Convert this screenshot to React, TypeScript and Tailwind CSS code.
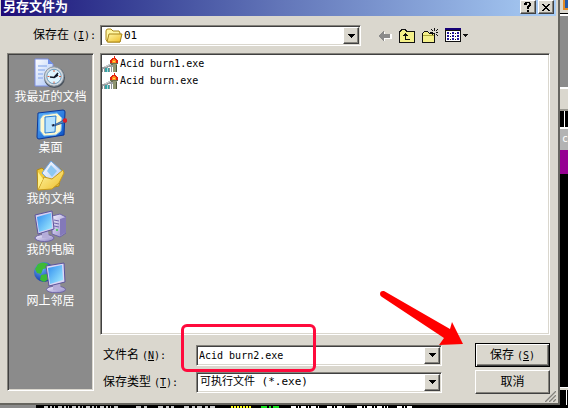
import React from 'react';

const SUNKEN =
  'border border-t-[#85837c] border-l-[#85837c] border-b-white border-r-white shadow-[inset_1px_1px_0_#404040,inset_-1px_-1px_0_#dad7ce]';
const RAISED =
  'border border-t-white border-l-white border-b-[#404040] border-r-[#404040] shadow-[inset_-1px_-1px_0_#85837c]';
const MONO = "font-['DejaVu_Sans_Mono','Noto_Sans_CJK_SC',monospace]";

function Latin({ children }: { children: React.ReactNode }) {
  return <span className={`${MONO} ml-[3px] text-[10px]`}>{children}</span>;
}

function Gradients() {
  return (
    <svg width="0" height="0" className="absolute" aria-hidden="true">
      <defs>
        <linearGradient id="screen" x1="0" y1="0" x2="1" y2="1">
          <stop offset="0" stopColor="#2f8df0" />
          <stop offset="1" stopColor="#a5efff" />
        </linearGradient>
        <linearGradient id="paper" x1="0" y1="0" x2="1" y2="1">
          <stop offset="0" stopColor="#ffffff" />
          <stop offset="1" stopColor="#a9c4f5" />
        </linearGradient>
        <linearGradient id="blue" x1="0" y1="0" x2="1" y2="1">
          <stop offset="0" stopColor="#58b4ff" />
          <stop offset="1" stopColor="#0a4fc4" />
        </linearGradient>
        <linearGradient id="gold" x1="0" y1="0" x2="1" y2="1">
          <stop offset="0" stopColor="#fff7a8" />
          <stop offset="1" stopColor="#eebd28" />
        </linearGradient>
        <linearGradient id="case" x1="0" y1="0" x2="1" y2="1">
          <stop offset="0" stopColor="#f4f1ff" />
          <stop offset="1" stopColor="#8d84c4" />
        </linearGradient>
        <radialGradient id="globe" cx="0.35" cy="0.3" r="0.8">
          <stop offset="0" stopColor="#6db4ff" />
          <stop offset="1" stopColor="#062a9c" />
        </radialGradient>
      </defs>
    </svg>
  );
}

function RecentIcon() {
  return (
    <svg width="32" height="32" viewBox="0 0 32 32" aria-hidden="true">
      <path d="M1 2H14L19 7V29H1Z" fill="url(#paper)" stroke="#7d8fe4" />
      <path d="M14 2V7H19Z" fill="#6f8fe6" />
      <path d="M4 9H13M4 13H11M4 17H9M4 21H9" stroke="#9db9f0" strokeWidth="1.500" />
      <circle cx="20.500" cy="20.500" r="10.500" fill="#4c545e" />
      <circle cx="20" cy="19.500" r="9.700" fill="#d4d9de" stroke="#8b98a5" />
      <circle cx="20" cy="19.500" r="7.200" fill="#dff5ff" stroke="#6f9dbd" />
      <path d="M16 20L20 20.500L24 16M20 20.500L24 18" stroke="#111827" strokeWidth="1.500" fill="none" />
      <path d="M20 13V15M20 24.500V26.500M13.500 19.500H15.500M25 19.500H27" stroke="#d65a3b" />
    </svg>
  );
}

function DesktopIcon() {
  return (
    <svg width="32" height="32" viewBox="0 0 32 32" aria-hidden="true">
      <path d="M3 5L28 2Q30 2 30 4L29 27L4 31Q2 31 2 29Z" fill="url(#blue)" stroke="#0b3797" />
      <path d="M8 7L22 5L27 10L26 23L21 27L9 28L5 23L5 11Z" fill="#fff9cf" stroke="#72b6ee" />
      <path d="M10 9L21 8L20 24L10 25Z" fill="#b8e3ff" stroke="#287cd2" />
      <path d="M17 18L29 12L31 14L19 18Z" fill="#4e90cd" stroke="#243b72" strokeWidth="0.700" />
      <circle cx="30" cy="12.500" r="2.200" fill="#d92027" />
      <path d="M16 17L19 16V18Z" fill="#112" />
    </svg>
  );
}

function DocumentsIcon() {
  return (
    <svg width="32" height="32" viewBox="0 0 32 32" aria-hidden="true">
      <path d="M3 11L8 9L11 12L27 10L25 27L4 31Z" fill="#eec83c" stroke="#b28a15" />
      <path d="M8 14L17 2L29 13L20 26Z" fill="url(#paper)" stroke="#6ea4df" />
      <path d="M13 12L17 6L23 12L18 18Z" fill="#8dc7f3" />
      <path d="M4 31L10 18L18 20L29 11L30 14L25 24L18 30Z" fill="url(#gold)" stroke="#c79a1d" />
      <path d="M4 13L9 20L4 30Z" fill="#fff087" />
    </svg>
  );
}

function ComputerIcon() {
  return (
    <svg width="32" height="32" viewBox="0 0 32 32" aria-hidden="true">
      <path d="M18 6L26 4L32 7V23L26 27L18 24Z" fill="url(#case)" stroke="#6e64a6" />
      <path d="M26 9V26L32 22V7Z" fill="#8379b9" />
      <path d="M20 10L25 11M20 13L25 14M20 16L25 17" stroke="#7166ac" />
      <circle cx="23" cy="20" r="1" fill="#35d340" />
      <ellipse cx="10.500" cy="28" rx="9.500" ry="3.500" fill="url(#case)" stroke="#6e64a6" />
      <path d="M8 21H14L15 28H8Z" fill="#b5add9" />
      <path d="M1 5L18 1L20 19L4 24Z" fill="#d4cff1" stroke="#5c549b" />
      <path d="M3 7L17 3L18 18L5 22Z" fill="url(#screen)" />
    </svg>
  );
}

function NetworkIcon() {
  return (
    <svg width="32" height="32" viewBox="0 0 32 32" aria-hidden="true">
      <circle cx="10" cy="11" r="10" fill="url(#globe)" />
      <path d="M4 3Q9 0 14 3L13 7L9 8L7 13L3 12L1 8ZM7 14L13 13L15 18L10 21L6 19ZM15 5L19 8L18 12L14 10Z" fill="#3eba36" />
      <ellipse cx="22" cy="28.500" rx="9.500" ry="3.300" fill="url(#case)" stroke="#6e64a6" />
      <path d="M19 22H26L27 29H19Z" fill="#b5add9" />
      <path d="M12 5L30 2L31 21L15 25Z" fill="#dad6f5" stroke="#5c549b" />
      <path d="M14 7L28 4L29 19L16 23Z" fill="url(#screen)" />
    </svg>
  );
}

function TorchIcon() {
  return (
    <svg width="16" height="16" viewBox="0 0 16 16" aria-hidden="true" shapeRendering="crispEdges">
      <path d="M0 11H2V10H4V9H6V8H8V7H11V11H6V12H3V13H0Z" fill="#9a9ea0" />
      <path d="M2 10H4V9H6V8H8V7H11V8H9V9H7V10H5V11H2Z" fill="#c9cccd" />
      <path d="M0 13H1V16H0ZM2 13H3V16H2ZM7 12H8V16H7ZM9 11H10V16H9Z" fill="#8b9293" />
      <path d="M3 12H7V16H3Z" fill="#37a4a6" />
      <path d="M5 12H6V16H5Z" fill="#a9d7d8" />
      <path d="M8 6H16V8H15V9H9V8H8Z" fill="#6b6f52" />
      <path d="M11 8H15V16H11Z" fill="#8f9670" />
      <path d="M14 9H15V16H14Z" fill="#4f553c" />
      <path d="M12 0H13V2H14V3H15V4H16V7H8V4H9V3H10V2H12Z" fill="#e22110" />
      <path d="M11 3H13V4H14V7H10V4H11Z" fill="#ff8a19" />
      <path d="M11 5H13V6H11Z" fill="#ffe14a" />
    </svg>
  );
}

function FolderIcon() {
  return (
    <svg width="18" height="16" viewBox="0 0 18 16" aria-hidden="true">
      <path d="M1 3Q1 1 3 1H6L8 3H14L15 5V14H3L1 12Z" fill="#fff6a3" stroke="#aa8619" />
      <path d="M4 6H17L15 14H2Z" fill="url(#gold)" stroke="#aa8619" />
    </svg>
  );
}

function BackIcon() {
  return (
    <svg width="14" height="12" viewBox="0 0 14 12" aria-hidden="true" shapeRendering="crispEdges">
      <path d="M2 6L7 1V4H14V9H7V12Z" fill="#fff" />
      <path d="M0 6H1V5H2V4H3V3H4V2H5V1H6V4H12V8H6V11H5V10H4V9H3V8H2V7H1V6Z" fill="#8b8b8b" />
    </svg>
  );
}

function UpIcon() {
  return (
    <svg width="16" height="14" viewBox="0 0 16 14" aria-hidden="true" shapeRendering="crispEdges">
      <path d="M1 2H2V1H6V2H7V3H15V13H1Z" fill="#f4f08a" />
      <path d="M0 13V2H1V1H2V0H6V1H7V2H15V13Z" fill="none" stroke="#111" transform="translate(0.500 0.500)" />
      <path d="M6 4H7V5H8V6H9V7H7V10H11V11H6V7H4V6H5V5H6Z" fill="#111" />
    </svg>
  );
}

function NewFolderIcon() {
  return (
    <svg width="16" height="15" viewBox="0 0 16 15" aria-hidden="true" shapeRendering="crispEdges">
      <path d="M0.500 14.500V5.500L2.500 3.500H5.500L7.500 5.500H12.500V14.500Z" fill="#f4f08a" stroke="#111" />
      <path d="M1 7H12" stroke="#aaa73e" />
      <path d="M12 0H13V3H12ZM12 6H13V9H12ZM8 4H11V5H8ZM14 4H16V5H14ZM9 1H10V2H9ZM10 2H11V3H10ZM15 1H16V2H15ZM14 2H15V3H14ZM10 6H11V7H10ZM14 6H15V7H14ZM15 7H16V8H15Z" fill="#111" />
    </svg>
  );
}

function ViewIcon() {
  return (
    <svg width="24" height="15" viewBox="0 0 24 15" aria-hidden="true" shapeRendering="crispEdges">
      <rect x="0" y="0" width="16" height="14" fill="#111" />
      <rect x="1" y="3" width="14" height="10" fill="#fff" />
      <rect x="0" y="0" width="16" height="2" fill="#150075" />
      <path d="M2 4H4V6H2ZM7 4H9V6H7ZM12 4H14V6H12ZM2 7H4V9H2ZM7 7H9V9H7ZM12 7H14V9H12ZM2 10H4V12H2ZM7 10H9V12H7ZM12 10H14V12H12Z" fill="#25189b" />
      <path d="M5 5H6M10 5H11M5 8H6M10 8H11M5 11H6M10 11H11" stroke="#111" />
      <path d="M18 6H23V7H22V8H21V9H20V8H19V7H18Z" fill="#111" />
    </svg>
  );
}

function DropArrow() {
  return (
    <span className={`flex h-[17px] w-4 items-center justify-center bg-[#dad7ce] ${RAISED}`}>
      <svg width="7" height="4" viewBox="0 0 7 4" aria-hidden="true" shapeRendering="crispEdges">
        <path d="M0 0H7V1H6V2H5V3H4V4H3V3H2V2H1V1H0Z" fill="#000" />
      </svg>
    </span>
  );
}

const places = [
  { label: '我最近的文档', Icon: RecentIcon },
  { label: '桌面', Icon: DesktopIcon },
  { label: '我的文档', Icon: DocumentsIcon },
  { label: '我的电脑', Icon: ComputerIcon },
  { label: '网上邻居', Icon: NetworkIcon },
];

const files = ['Acid burn1.exe', 'Acid burn.exe'];

function TitleBar() {
  return (
    <header className="flex h-4 items-start justify-between bg-linear-to-r from-[#1f0878] via-[#6275b8] to-[#a9cdf5] px-[2px]">
      <h1 className="text-[13px] leading-[13px] font-bold text-white">另存文件为</h1>
      <div className="flex gap-[2px]">
        <button type="button" aria-label="帮助" className={`flex h-[14px] w-4 items-center justify-center bg-[#dad7ce] ${RAISED}`}>
          <svg width="8" height="10" viewBox="0 0 8 10" aria-hidden="true" shapeRendering="crispEdges">
            <path d="M1 0H6V1H7V4H6V5H5V7H3V4H4V3H5V1H3V3H0V1H1ZM3 8H5V10H3Z" fill="#000" />
          </svg>
        </button>
        <button type="button" aria-label="关闭" className={`flex h-[14px] w-4 items-center justify-center bg-[#dad7ce] ${RAISED}`}>
          <svg width="8" height="7" viewBox="0 0 8 7" aria-hidden="true" shapeRendering="crispEdges">
            <path d="M0 0H2V1H3V2H5V1H6V0H8V1H7V2H6V3H5V4H6V5H7V6H8V7H6V6H5V5H3V6H2V7H0V6H1V5H2V4H3V3H2V2H1V1H0Z" fill="#000" />
          </svg>
        </button>
      </div>
    </header>
  );
}

function LocationRow() {
  return (
    <div className="flex h-[21px] items-center">
      <label htmlFor="location" className="w-[93px] shrink-0 pl-[26px] whitespace-nowrap">
        保存在<Latin>(<u>I</u>):</Latin>
      </label>
      <div className={`relative flex h-[21px] min-w-0 flex-1 items-center bg-white ${SUNKEN}`}>
        <span className="pointer-events-none absolute left-1">
          <FolderIcon />
        </span>
        <select id="location" className={`h-full w-full appearance-none bg-transparent pl-[23px] text-[11px] outline-none ${MONO}`}>
          <option>01</option>
        </select>
        <span className="pointer-events-none absolute right-px">
          <DropArrow />
        </span>
      </div>
      <div className="flex w-[189px] shrink-0 items-center gap-[7px] pl-[17px]">
        <button type="button" aria-label="后退"><BackIcon /></button>
        <button type="button" aria-label="向上一级"><UpIcon /></button>
        <button type="button" aria-label="新建文件夹"><NewFolderIcon /></button>
        <button type="button" aria-label="查看"><ViewIcon /></button>
      </div>
    </div>
  );
}

function Places() {
  return (
    <nav className={`mb-[3px] flex w-[87px] shrink-0 flex-col items-center gap-[5px] bg-[#8b8b8b] pt-[3px] ${SUNKEN}`}>
      {places.map(({ label, Icon }) => (
        <button key={label} type="button" className="flex flex-col items-center gap-[2px] text-[12px] leading-3 whitespace-nowrap text-white">
          <Icon />
          {label}
        </button>
      ))}
    </nav>
  );
}

function FileList() {
  return (
    <ul className={`relative min-h-24 flex-1 bg-white pt-px pl-px ${SUNKEN}`}>
      {files.map((name) => (
        <li key={name} className="flex h-[17px] items-center gap-[2px] text-[10px]">
          <TorchIcon />
          <span className={MONO}>{name}</span>
        </li>
      ))}
      <li aria-hidden="true" className="pointer-events-none absolute right-[85px] -bottom-3 list-none">
        <svg width="84" height="55" viewBox="0 0 84 55">
          <path d="M3 0Q0 0 0 3Q0 5 2 6L64 47L59 54L83 53L72 31L70 38L4 0Z" fill="#ff0000" />
        </svg>
      </li>
    </ul>
  );
}

function SaveForm() {
  return (
    <form className="mt-2 grid grid-cols-[93px_1fr_75px] items-center gap-y-[3px] pl-[3px]" onSubmit={(e) => e.preventDefault()}>
      <label htmlFor="filename" className="whitespace-nowrap">
        文件名<Latin>(<u>N</u>):</Latin>
      </label>
      <div className={`relative mr-[33px] flex h-[21px] items-center bg-white ${SUNKEN}`}>
        <input
          id="filename"
          defaultValue="Acid burn2.exe"
          className={`h-full w-full min-w-0 bg-transparent pl-[2px] text-[10px] outline-none ${MONO}`}
        />
        <button type="button" aria-label="最近的文件名" className="mr-px">
          <DropArrow />
        </button>
        <span className="pointer-events-none absolute -top-[22px] -left-4 h-12 w-[135px] rounded-md border-[3px] border-[#ff0a3c]" />
      </div>
      <button type="submit" className="h-6 border border-black bg-[#dad7ce] shadow-[inset_1px_1px_0_#fff,inset_-1px_-1px_0_#404040,inset_-2px_-2px_0_#85837c]">
        保存<Latin>(<u>S</u>)</Latin>
      </button>

      <label htmlFor="filetype" className="whitespace-nowrap">
        保存类型<Latin>(<u>T</u>):</Latin>
      </label>
      <div className={`relative mr-[33px] flex h-[21px] items-center bg-white ${SUNKEN}`}>
        <select id="filetype" className={`h-full w-full appearance-none bg-transparent pl-[3px] text-[11px] outline-none ${MONO}`}>
          <option>可执行文件 (*.exe)</option>
        </select>
        <span className="pointer-events-none absolute right-px">
          <DropArrow />
        </span>
      </div>
      <button type="button" className={`h-6 bg-[#dad7ce] ${RAISED}`}>
        取消
      </button>
    </form>
  );
}

function SideWindow() {
  return (
    <div className="flex w-2 shrink-0 flex-col overflow-hidden bg-black" aria-hidden="true">
      <div className="h-[14px] border-b border-black bg-[#dad7ce] pl-[3px]">
        <div className="h-[10px] border-b-2 border-l-2 border-[#e08a28] bg-[#2459a8]" />
      </div>
      <div className="h-[73px] border-t-2 border-white bg-[#8b8b8b]" />
      <div className="h-6 border-t-2 border-b-2 border-t-white border-b-[#9a9890] bg-[#dad7ce]" />
      <div className="flex h-4 justify-center">
        <div className="w-px bg-white" />
      </div>
      <div className="h-[23px] border-t-2 border-white bg-[#b3b3b3] pl-[2px] text-[10px] leading-5 text-white">
        <span className={MONO}>c</span>
      </div>
      <div className="h-6 bg-[#960092]" />
      <div className="flex-1" />
      <div className="h-[3px] border-t border-white bg-[#dad7ce]" />
      <div className="flex h-[15px] justify-end pr-px">
        <div className="w-px bg-white" />
      </div>
    </div>
  );
}

function BottomWindow() {
  return (
    <div className="flex h-[3px] shrink-0 items-end bg-black" aria-hidden="true">
      <div className="h-[3px] w-9 bg-[#8b8b8b]" />
      <svg className="h-[2px] flex-1" preserveAspectRatio="none" viewBox="0 0 532 2">
        <g fill="none" strokeWidth="2">
          <path d="M8 1H82" stroke="#ccc" strokeDasharray="4 2 2 2 1 3" />
          <path d="M100 1H112M122 1H138M148 1H180" stroke="#ccc" strokeDasharray="5 3 3 2" />
          <path d="M195 1H216" stroke="#ffff20" strokeDasharray="2 1" />
          <path d="M225 1H244" stroke="#17e321" strokeDasharray="6 2 2 2" />
          <path d="M255 1H285M291 1H310M321 1H352M361 1H376" stroke="#fff" strokeDasharray="5 2 1 2" />
        </g>
      </svg>
    </div>
  );
}

export default function App() {
  return (
    <div className="flex min-h-screen flex-col overflow-hidden bg-black font-['Liberation_Sans','Noto_Sans_CJK_SC',sans-serif] text-[12px] leading-4 text-black">
      <Gradients />
      <div className="flex flex-1">
        <main className="relative flex min-w-0 flex-1 flex-col border-r-2 border-b-2 border-[#66655f] bg-[#dad7ce] pl-px">
          <div className="pr-[2px]">
            <TitleBar />
          </div>
          <div className="flex flex-1 flex-col gap-[7px] pt-[9px] pr-2 pb-[9px] pl-[6px]">
            <LocationRow />
            <div className="flex flex-1 gap-[6px]">
              <Places />
              <div className="flex min-w-0 flex-1 flex-col">
                <FileList />
                <SaveForm />
              </div>
            </div>
          </div>
          <svg className="absolute right-[2px] bottom-px" width="12" height="12" viewBox="0 0 12 12" aria-hidden="true">
            <path d="M0 12L12 0M4 12L12 4M8 12L12 8" stroke="#fff" />
            <path d="M1 12L12 1M5 12L12 5M9 12L12 9" stroke="#85837c" strokeWidth="1.500" />
          </svg>
        </main>
        <SideWindow />
      </div>
      <BottomWindow />
    </div>
  );
}
